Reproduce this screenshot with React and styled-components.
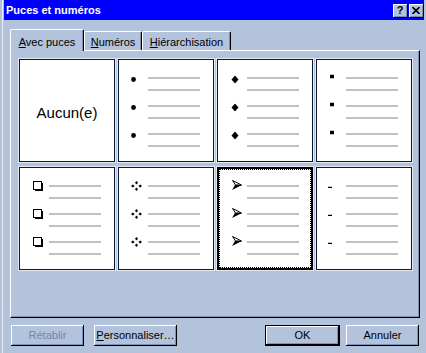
import React from "react";
import styled, { createGlobalStyle } from "styled-components";

const BG = "#b3c3dc";
const SHADOW = "#7f91b4";
const CELL_EDGE = "#0c1836";
const RING = "#e3e9f3";

const GlobalStyle = createGlobalStyle`
  html, body { margin: 0; padding: 0; background: ${BG}; }
  body { font-family: "Liberation Sans", Arial, sans-serif; font-size: 11px; color: #000; }
  * { box-sizing: border-box; }
`;

const Window = styled.div`
  width: 426px;
  height: 353px;
  background: ${BG};
  display: flex;
  flex-direction: column;
  box-shadow: inset 2px 0 0 ${BG}, inset 3px 0 0 #e8edf6;
  overflow: hidden;
`;

const TitleBar = styled.div`
  height: 20px;
  margin: 0 2px 0 4px;
  background: #0000ff;
  display: flex;
  align-items: flex-start;
  justify-content: space-between;
  padding: 0 0 0 2px;
`;

const Title = styled.span`
  color: #fff;
  font-weight: bold;
  font-size: 11px;
  line-height: 20px;
`;

const CaptionButtons = styled.div`
  display: flex;
  gap: 1px;
  margin-top: 4px;
`;

const CaptionButton = styled.div`
  width: 15px;
  height: 14px;
  background: ${BG};
  box-shadow: inset -1px -1px 0 #000, inset 1px 1px 0 #fff, inset -2px -2px 0 ${SHADOW};
  display: flex;
  align-items: center;
  justify-content: center;
  font-weight: bold;
  font-size: 11px;
  line-height: 1;
  padding: 0 1px 1px 0;
`;

const Body = styled.div`
  padding: 0 6px 0 10px;
  display: flex;
  flex-direction: column;
`;

const TabRow = styled.div`
  display: flex;
  align-items: flex-end;
  margin-top: 9px;
  margin-bottom: -1px;
  position: relative;
  z-index: 1;
`;

const Tab = styled.div`
  width: ${(p) => p.$w}px;
  height: ${(p) => (p.$active ? 22 : 19)}px;
  margin-bottom: ${(p) => (p.$active ? 0 : 1)}px;
  padding-top: ${(p) => (p.$active ? 6 : 4)}px;
  text-align: center;
  line-height: 13px;
  background: ${BG};
  border-top: 1px solid #fff;
  border-left: 1px solid #fff;
  border-right: 1px solid #000;
  border-radius: 2px 2px 0 0;
  box-shadow: inset -1px 0 0 ${SHADOW};
  white-space: nowrap;
`;

const Panel = styled.div`
  height: 268px;
  width: 410px;
  border-top: 1px solid #fff;
  border-left: 1px solid #fff;
  border-right: 1px solid #000;
  border-bottom: 1px solid #000;
  box-shadow: inset -1px -1px 0 ${SHADOW};
  padding: 8px 0 0 8px;
`;

const Grid = styled.div`
  display: grid;
  grid-template-columns: repeat(4, 96px);
  grid-auto-rows: 103px;
  column-gap: 3px;
  row-gap: 5px;
`;

const Cell = styled.div`
  position: relative;
  background: #fff;
  box-shadow: 0 0 0 1px ${RING}, inset 0 0 0 ${(p) => (p.$selected ? 2 : 1)}px
      ${(p) => (p.$selected ? "#000" : CELL_EDGE)};
  display: flex;
  flex-direction: column;
  gap: 14px;
  padding-top: 18px;

  &::after {
    content: "";
    display: ${(p) => (p.$selected ? "block" : "none")};
    position: absolute;
    inset: 2px;
    border: 1px dotted #000;
  }
`;

const EmptyCell = styled(Cell)`
  padding-top: 4px;
  align-items: center;
  justify-content: center;
  font-size: 15px;
`;

const Group = styled.div`
  display: flex;
  align-items: flex-start;
`;

const Mark = styled.div`
  width: 30px;
  height: 2px;
  flex: none;
  display: flex;
  align-items: center;
  padding-left: ${(p) => p.$x}px;
  transform: translateY(${(p) => p.$dy}px);

  svg {
    display: block;
    flex: none;
  }
`;

const Lines = styled.div`
  display: flex;
  flex-direction: column;
  gap: 10px;
`;

const Line = styled.div`
  width: 52px;
  height: 2px;
  background: #c0c0c0;
`;

const ButtonRow = styled.div`
  display: flex;
  align-items: flex-start;
  margin-top: 7px;
  padding: 0 7px 0 11px;
`;

const Button = styled.div`
  width: ${(p) => p.$w}px;
  height: 21px;
  margin-left: ${(p) => p.$ml || 0}px;
  background: ${BG};
  box-shadow: ${(p) =>
    p.$default
      ? `inset 0 0 0 1px #000, inset -2px -2px 0 #000, inset 2px 2px 0 #fff, inset -3px -3px 0 ${SHADOW}`
      : `inset -1px -1px 0 #000, inset 1px 1px 0 #fff, inset -2px -2px 0 ${SHADOW}`};
  display: flex;
  align-items: center;
  justify-content: center;
  color: ${(p) => (p.$disabled ? "#6f86b6" : "#000")};
  white-space: nowrap;
  padding-bottom: 1px;
`;

const Spacer = styled.div`
  flex: 1;
`;

const Bullet = ({ kind }) => {
  switch (kind) {
    case "dot":
      return (
        <svg width="5" height="5" viewBox="0 0 5 5">
          <circle cx="2.5" cy="2.5" r="2.4" fill="#000" />
        </svg>
      );
    case "diamond":
      return (
        <svg width="8" height="8" viewBox="0 0 8 8">
          <polygon points="4,0 7.5,4 4,8 0.5,4" fill="#000" />
        </svg>
      );
    case "square":
      return (
        <svg width="4" height="4" viewBox="0 0 4 4">
          <rect width="4" height="4" fill="#000" />
        </svg>
      );
    case "box":
      return (
        <svg width="10" height="10" viewBox="0 0 10 10">
          <rect x="0.5" y="0.5" width="8" height="8" fill="#fff" stroke="#000" />
          <rect x="9" y="2" width="1" height="8" fill="#000" />
          <rect x="2" y="9" width="8" height="1" fill="#000" />
          <rect x="8" y="1" width="1" height="8" fill="#000" />
          <rect x="1" y="8" width="8" height="1" fill="#000" />
        </svg>
      );
    case "star":
      return (
        <svg width="11" height="10" viewBox="0 0 11 10">
          <polygon points="5.5,0 7,1.7 5.5,3.4 4,1.7" fill="#000" />
          <polygon points="5.5,6.6 7,8.3 5.5,10 4,8.3" fill="#000" />
          <polygon points="1.8,3.4 3.6,5 1.8,6.6 0,5" fill="#000" />
          <polygon points="9.2,3.4 11,5 9.2,6.6 7.4,5" fill="#000" />
        </svg>
      );
    case "arrow":
      return (
        <svg width="10" height="10" viewBox="0 0 10 10">
          <polygon points="0.5,0.5 9.5,5 3.5,5" fill="#fff" stroke="#000" strokeWidth="1" />
          <polygon points="3,5 10,5 0,10" fill="#000" />
        </svg>
      );
    case "dash":
      return (
        <svg width="4" height="2" viewBox="0 0 4 2">
          <rect width="4" height="1.5" fill="#000" />
        </svg>
      );
    default:
      return null;
  }
};

const STYLES = [
  { kind: "none" },
  { kind: "dot", x: 13, dy: 1 },
  { kind: "diamond", x: 14, dy: 1.5 },
  { kind: "square", x: 14, dy: -1.5 },
  { kind: "box", x: 14, dy: 0 },
  { kind: "star", x: 13, dy: 0 },
  { kind: "arrow", x: 15, dy: -1, selected: true },
  { kind: "dash", x: 12, dy: 1.5 },
];

const BulletCell = ({ item }) => (
  <Cell $selected={item.selected}>
    {[0, 1, 2].map((i) => (
      <Group key={i}>
        <Mark $x={item.x} $dy={item.dy}>
          <Bullet kind={item.kind} />
        </Mark>
        <Lines>
          <Line />
          <Line />
        </Lines>
      </Group>
    ))}
  </Cell>
);

const App = () => {
  return (
    <>
      <GlobalStyle />
      <Window>
        <TitleBar>
          <Title>Puces et numéros</Title>
          <CaptionButtons>
            <CaptionButton>?</CaptionButton>
            <CaptionButton>
              <svg width="8" height="7" viewBox="0 0 8 7">
                <path d="M0.5 0 L7.5 7 M7.5 0 L0.5 7" stroke="#000" strokeWidth="1.6" />
              </svg>
            </CaptionButton>
          </CaptionButtons>
        </TitleBar>
        <Body>
          <TabRow>
            <Tab $w={74} $active>
              <u>A</u>vec puces
            </Tab>
            <Tab $w={58}>
              <u>N</u>uméros
            </Tab>
            <Tab $w={89}>
              <u>H</u>iérarchisation
            </Tab>
          </TabRow>
          <Panel>
            <Grid>
              {STYLES.map((item, i) =>
                item.kind === "none" ? (
                  <EmptyCell key={i}>Aucun(e)</EmptyCell>
                ) : (
                  <BulletCell key={i} item={item} />
                )
              )}
            </Grid>
          </Panel>
        </Body>
        <ButtonRow>
          <Button $w={73} $disabled>
            Rétablir
          </Button>
          <Button $w={83} $ml={10}>
            <span>
              <u>P</u>ersonnaliser…
            </span>
          </Button>
          <Spacer />
          <Button $w={75} $default>
            OK
          </Button>
          <Button $w={73} $ml={6}>
            Annuler
          </Button>
        </ButtonRow>
      </Window>
    </>
  );
};

export default App;
